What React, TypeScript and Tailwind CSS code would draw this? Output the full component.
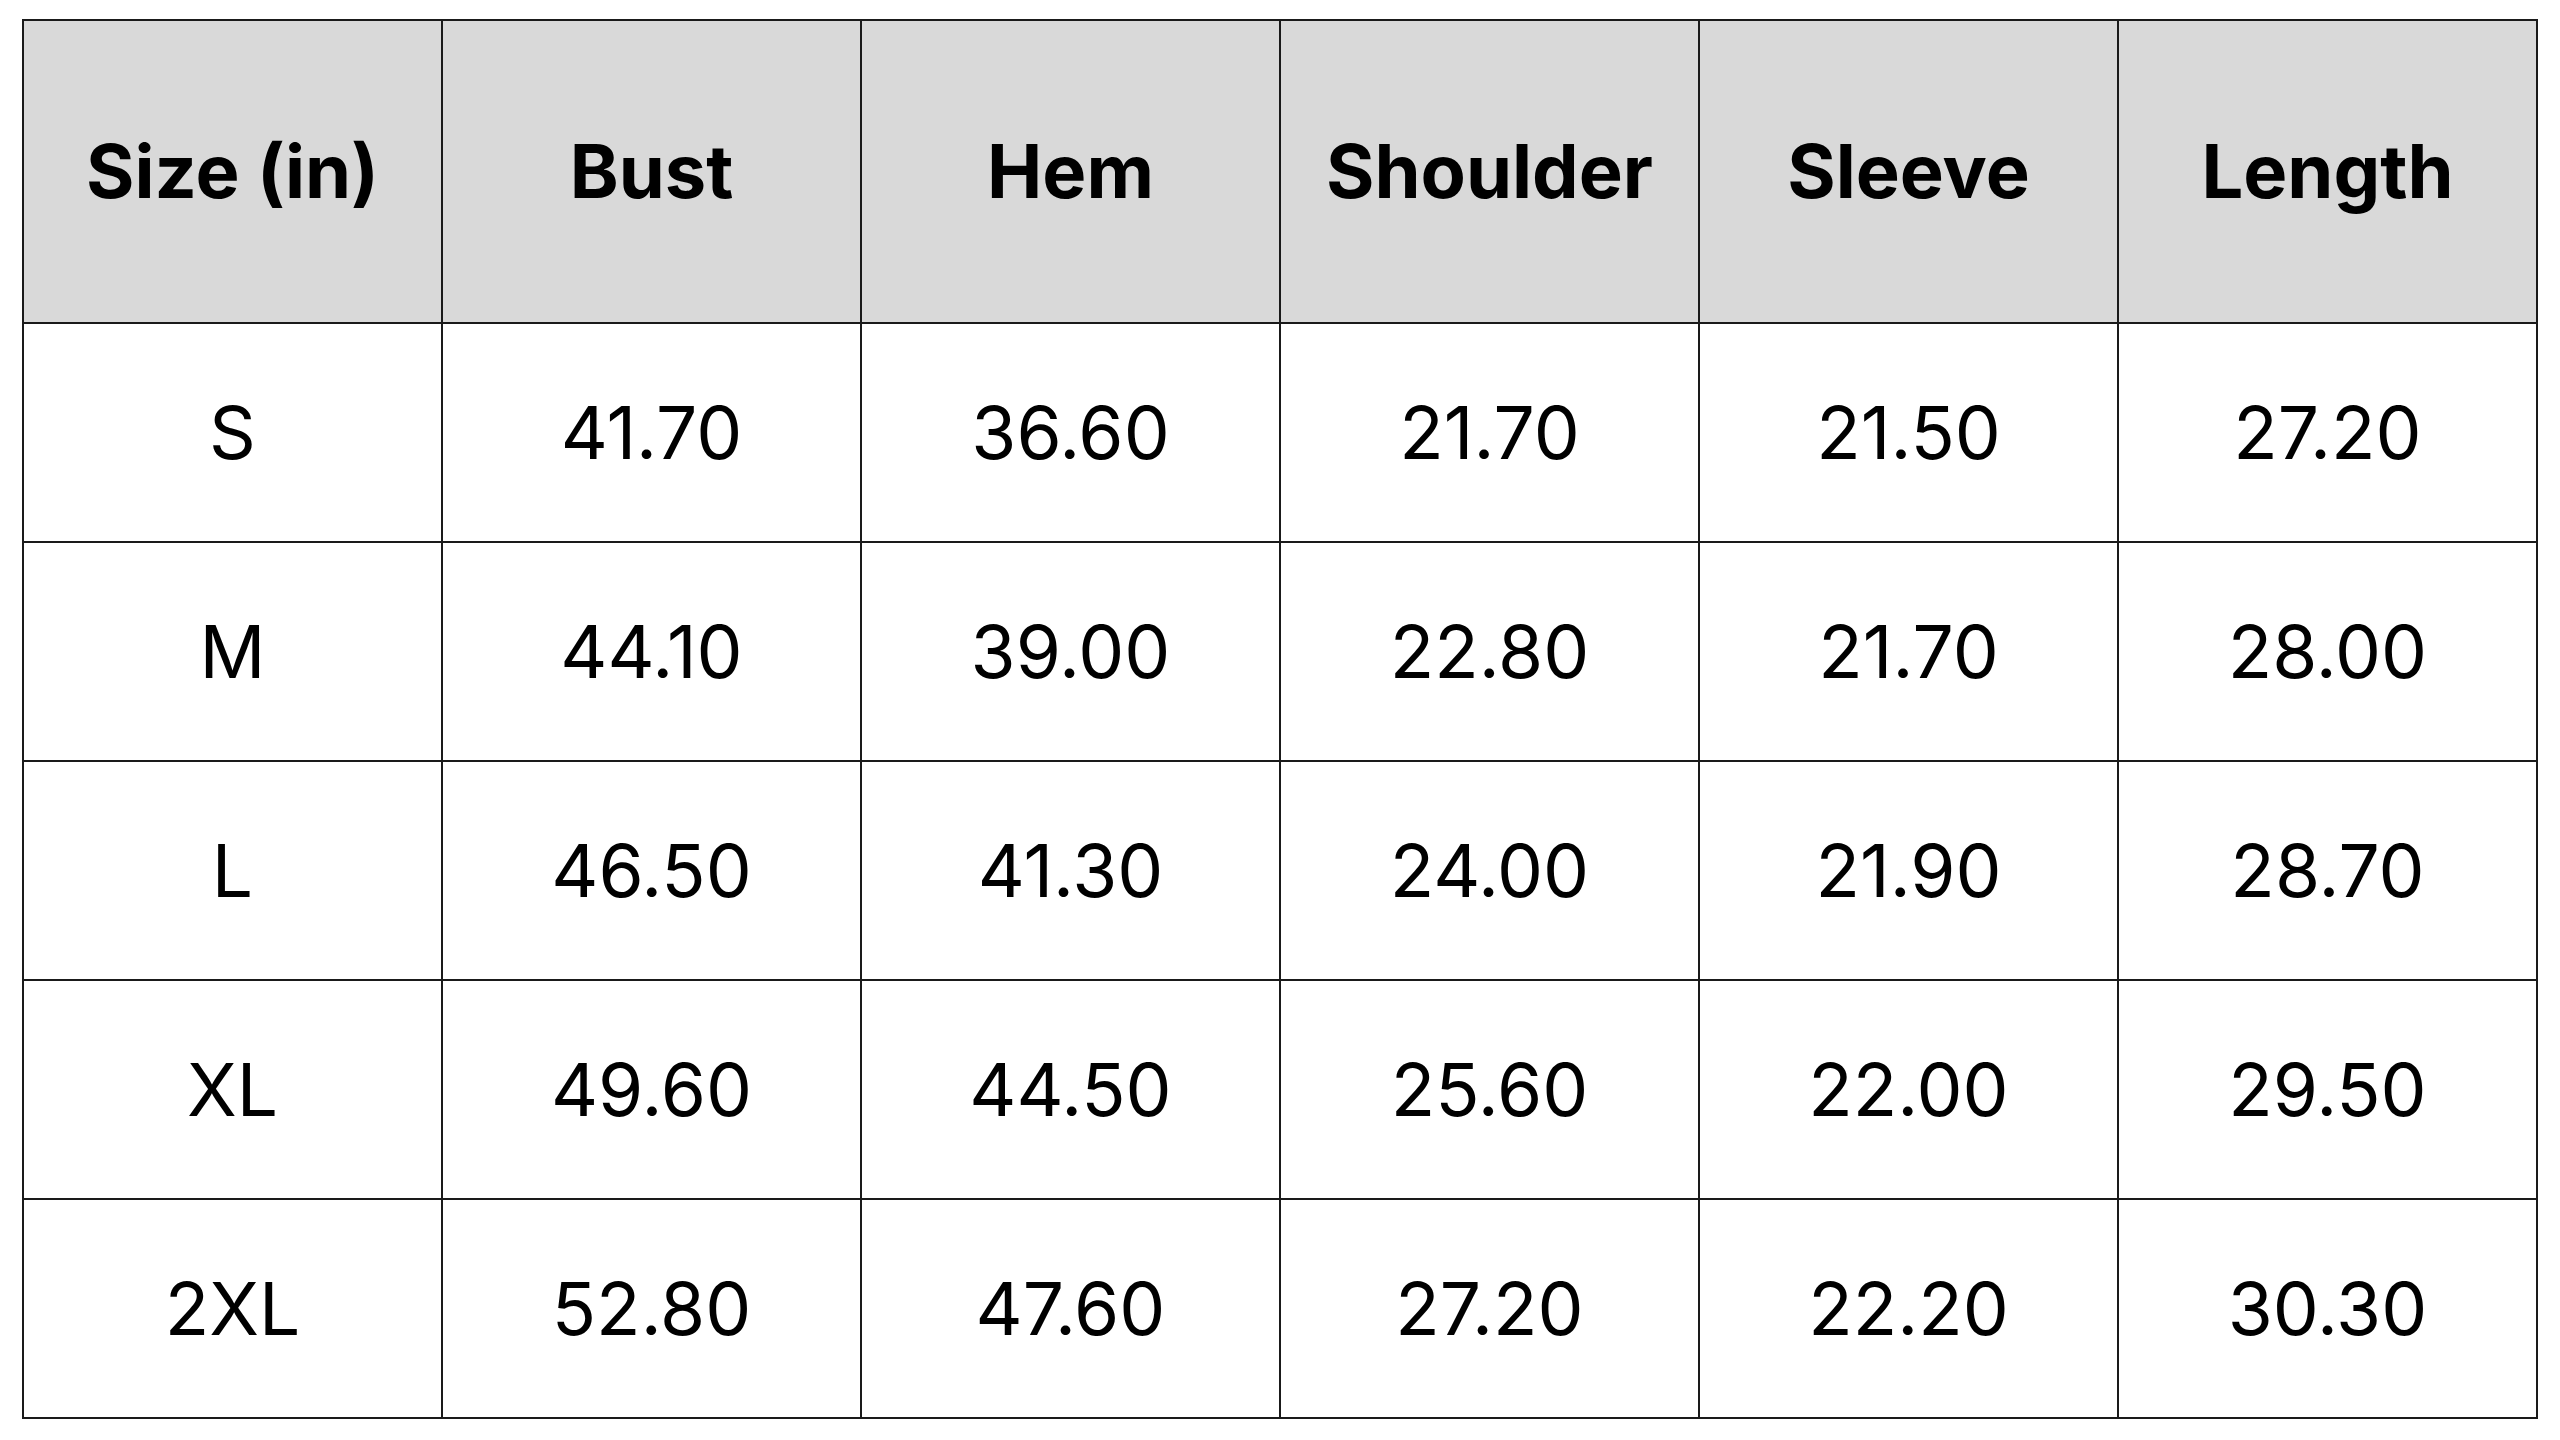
const headers = ["Size (in)", "Bust", "Hem", "Shoulder", "Sleeve", "Length"];

const rows = [
  ["S", "41.70", "36.60", "21.70", "21.50", "27.20"],
  ["M", "44.10", "39.00", "22.80", "21.70", "28.00"],
  ["L", "46.50", "41.30", "24.00", "21.90", "28.70"],
  ["XL", "49.60", "44.50", "25.60", "22.00", "29.50"],
  ["2XL", "52.80", "47.60", "27.20", "22.20", "30.30"],
];

export default function App() {
  return (
    <div className="min-h-screen bg-white pl-[22px] pt-[19px] font-['Inter',sans-serif] text-black">
      <table className="w-[2516px] table-fixed border-collapse border-2 border-[#1a1a1a]">
        <thead>
          <tr className="h-[303px] bg-[#d9d9d9]">
            {headers.map((h) => (
              <th
                key={h}
                className="border-2 border-[#1a1a1a] text-center align-middle text-[74px] font-bold"
              >
                {h}
              </th>
            ))}
          </tr>
        </thead>
        <tbody>
          {rows.map((r) => (
            <tr key={r[0]} className="h-[219px]">
              {r.map((v, i) => (
                <td
                  key={i}
                  className="border-2 border-[#1a1a1a] text-center align-middle text-[73px] font-normal"
                >
                  {v}
                </td>
              ))}
            </tr>
          ))}
        </tbody>
      </table>
    </div>
  );
}
